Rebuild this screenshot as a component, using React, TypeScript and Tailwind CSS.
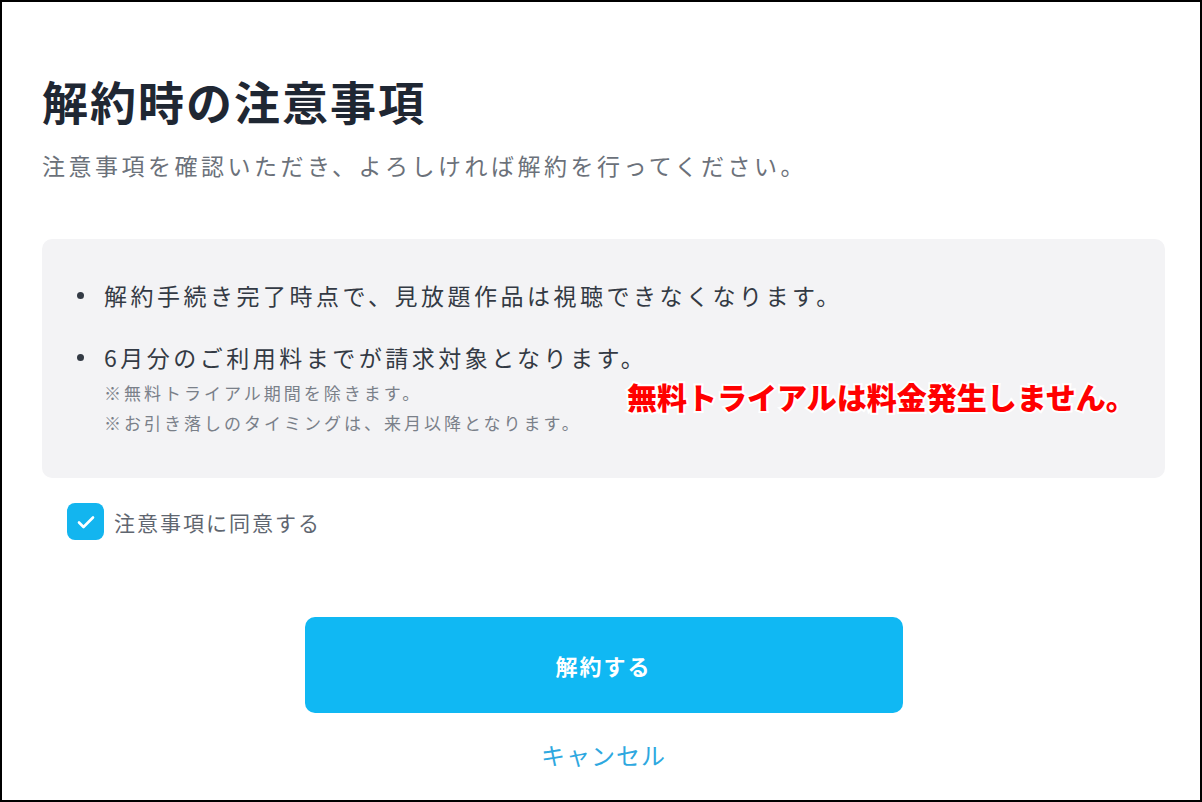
import React from 'react';

const font = { fontFamily: '"Noto Sans CJK JP", "Noto Sans", sans-serif' };

export default function App() {
  return (
    <div
      className="relative w-[1202px] h-[802px] border-2 border-black bg-white pl-[40px] pr-[35px] pt-[70px]"
      style={font}
    >
      <h1 className="text-[46px] leading-[56px] font-bold tracking-[2px] text-[#1f2733]">解約時の注意事項</h1>
      <p className="mt-[21px] text-[23px] leading-[32px] tracking-[3.5px] text-[#6b717a]">
        注意事項を確認いただき、よろしければ解約を行ってください。
      </p>

      <div className="relative mt-[58px] h-[239px] rounded-[10px] bg-[#f3f3f5] pt-[40px] pl-[35px]">
        <ul className="flex flex-col gap-[30px] text-[23px] leading-[32px] tracking-[3.5px] text-[#333a44]">
          <li className="flex items-start">
            <span className="mt-[13px] w-[7px] h-[7px] rounded-full bg-[#333a44] shrink-0" />
            <span className="ml-[20px]">解約手続き完了時点で、見放題作品は視聴できなくなります。</span>
          </li>
          <li className="flex items-start">
            <span className="mt-[13px] w-[7px] h-[7px] rounded-full bg-[#333a44] shrink-0" />
            <div className="ml-[20px]">
              <div>6月分のご利用料までが請求対象となります。</div>
              <div className="mt-[5px] text-[17px] leading-[30px] tracking-[3px] text-[#7a8089]">
                <div>※無料トライアル期間を除きます。</div>
                <div>※お引き落しのタイミングは、来月以降となります。</div>
              </div>
            </div>
          </li>
        </ul>
        <div
          className="absolute left-[585px] top-[139px] text-[30px] leading-[36px] font-black text-[#ff0000] whitespace-nowrap"
          style={{ WebkitTextStroke: '4px white', paintOrder: 'stroke fill' }}
        >
          無料トライアルは料金発生しません。
        </div>
      </div>

      <label className="mt-[25px] ml-[25px] flex items-center gap-[10px]">
        <span className="flex items-center justify-center w-[37px] h-[37px] rounded-[8px] bg-[#13b5ef]">
          <svg width="18" height="14" viewBox="0 0 18 14" fill="none">
            <path d="M2 7.5 L6.5 12 L16 2.5" stroke="white" strokeWidth="2.6" strokeLinecap="round" strokeLinejoin="round" />
          </svg>
        </span>
        <span className="text-[21px] leading-[32px] tracking-[2px] text-[#5f6670]">注意事項に同意する</span>
      </label>

      <button className="mt-[77px] mx-auto flex items-center justify-center w-[598px] h-[96px] rounded-[10px] bg-[#10b8f3] text-white text-[22px] font-bold tracking-[2px]">
        解約する
      </button>

      <div className="mt-[26px] text-center text-[24px] leading-[32px] tracking-[1px] text-[#2ea8e0]">キャンセル</div>
    </div>
  );
}
